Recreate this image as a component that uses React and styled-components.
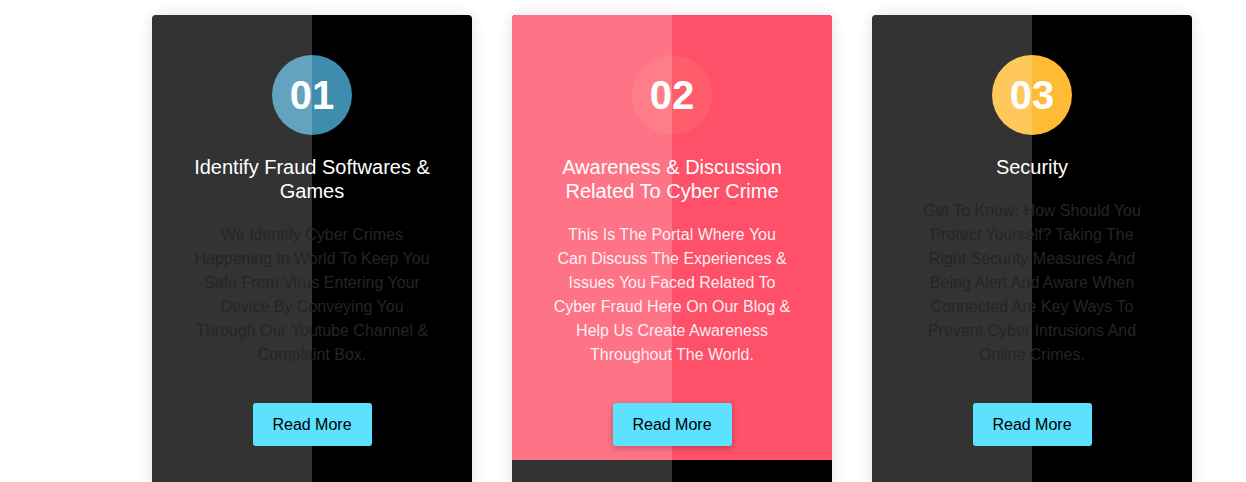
import React from 'react'
import styled, { createGlobalStyle } from 'styled-components'

const GlobalStyle = createGlobalStyle`
  * { box-sizing: border-box; }
  body {
    margin: 0;
    background: #fff;
    font-family: "Liberation Sans", Arial, sans-serif;
    overflow: hidden;
  }
`

const cards = [
  {
    num: '01',
    color: '#3e8dae',
    title: 'Identify Fraud Softwares & Games',
    text: 'We Identify Cyber Crimes Happening In World To Keep You Safe From Virus Entering Your Device By Conveying You Through Our Youtube Channel & Complaint Box.',
  },
  {
    num: '02',
    color: '#ff5d6b',
    title: 'Awareness & Discussion Related To Cyber Crime',
    text: 'This Is The Portal Where You Can Discuss The Experiences & Issues You Faced Related To Cyber Fraud Here On Our Blog & Help Us Create Awareness Throughout The World.',
    active: true,
  },
  {
    num: '03',
    color: '#ffbb33',
    title: 'Security',
    text: 'Get To Know: How Should You Protect Yourself? Taking The Right Security Measures And Being Alert And Aware When Connected Are Key Ways To Prevent Cyber Intrusions And Online Crimes.',
  },
]

function App() {
  return (
    <>
      <GlobalStyle />
      <Section>
        {cards.map((c) => (
          <Card key={c.num}>
            <Content $active={c.active}>
              <Circle $color={c.color}>
                <Num>{c.num}</Num>
              </Circle>
              <Title>{c.title}</Title>
              <Text $active={c.active}>{c.text}</Text>
              <Button $active={c.active}>Read More</Button>
            </Content>
          </Card>
        ))}
      </Section>
    </>
  )
}

export default App

const Section = styled.div`
  display: flex;
  gap: 40px;
  padding: 15px 0 0 152px;
  height: 482px;
`

const Card = styled.div`
  position: relative;
  width: 320px;
  height: 520px;
  flex-shrink: 0;
  background: #000;
  border-radius: 4px;
  box-shadow: 0 0 14px rgba(0, 0, 0, 0.12);
  overflow: hidden;
  &::before {
    content: '';
    position: absolute;
    top: 0;
    left: 0;
    width: 50%;
    height: 100%;
    background: rgba(255, 255, 255, 0.2);
    z-index: 2;
    pointer-events: none;
  }
`

const Content = styled.div`
  height: 445px;
  padding: 40px 40px 0;
  display: flex;
  flex-direction: column;
  align-items: center;
  text-align: center;
  background: ${(p) => (p.$active ? '#fe5068' : 'transparent')};
`

const Circle = styled.div`
  width: 80px;
  height: 80px;
  border-radius: 50%;
  background: ${(p) => p.$color};
  display: flex;
  align-items: center;
  justify-content: center;
  position: relative;
  z-index: 1;
`

const Num = styled.span`
  position: relative;
  z-index: 3;
  color: #fff;
  font-size: 40px;
  font-weight: 700;
  line-height: 1;
`

const Title = styled.h3`
  position: relative;
  z-index: 3;
  margin: 20px 0 0;
  color: #fff;
  font-size: 20px;
  font-weight: 400;
  line-height: 24px;
`

const Text = styled.p`
  position: relative;
  z-index: 3;
  margin: 20px 0 0;
  font-size: 16px;
  line-height: 24px;
  color: ${(p) => (p.$active ? 'rgba(255, 255, 255, 0.92)' : '#23252a')};
`

const Button = styled.button`
  position: relative;
  z-index: 3;
  margin-top: 36px;
  width: 119px;
  height: 43px;
  padding: 0;
  border: none;
  border-radius: 3px;
  background: #5ce1ff;
  color: #000;
  font-family: "Liberation Sans", Arial, sans-serif;
  font-size: 16px;
  box-shadow: ${(p) => (p.$active ? '0 2px 6px rgba(0, 0, 0, 0.25)' : 'none')};
`
